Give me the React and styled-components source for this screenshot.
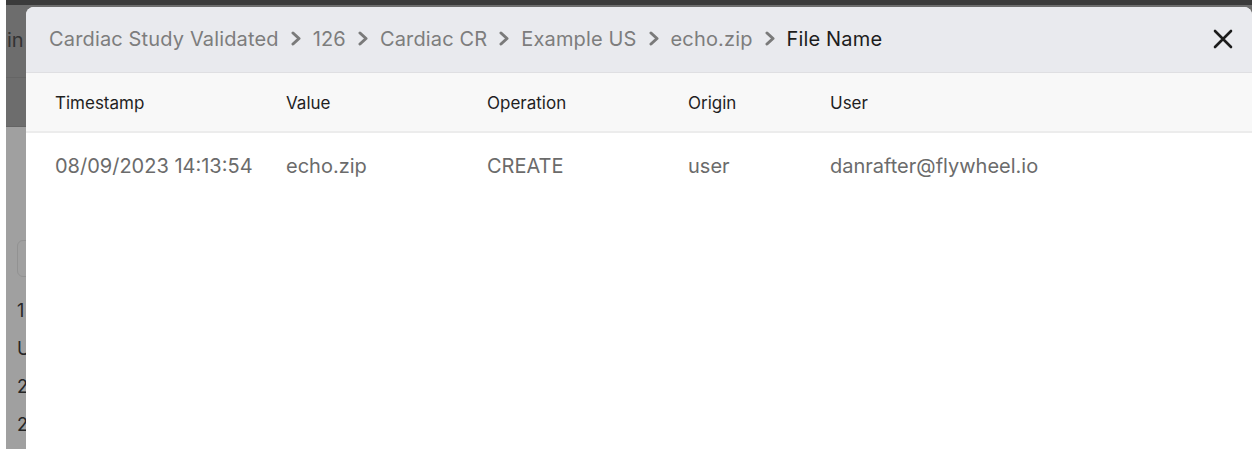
import React from 'react'
import styled, { createGlobalStyle } from 'styled-components'

const GlobalStyle = createGlobalStyle`
    html, body {
        margin: 0;
        padding: 0;
        background: #ffffff;
    }
    body {
        font-family: Inter, "Noto Sans", "Liberation Sans", sans-serif;
    }
`

const crumbs = ['Cardiac Study Validated', '126', 'Cardiac CR', 'Example US', 'echo.zip']

const columns = ['Timestamp', 'Value', 'Operation', 'Origin', 'User']

const rows = [
    ['08/09/2023 14:13:54', 'echo.zip', 'CREATE', 'user', 'danrafter@flywheel.io'],
]

const Chevron = () => (
    <svg width="12" height="15" viewBox="0 0 12 15" fill="none">
        <path d="M3 2l6 5.5-6 5.5" stroke="#7a7a7a" strokeWidth="3" strokeLinecap="round" strokeLinejoin="round" />
    </svg>
)

const CloseIcon = () => (
    <svg width="20" height="20" viewBox="0 0 20 20" fill="none">
        <path d="M2 2l16 16M18 2L2 18" stroke="#1c1c1c" strokeWidth="2.6" strokeLinecap="round" />
    </svg>
)

const App = () => {
    return (
        <>
            <GlobalStyle />
            <Screen>
                <Gutter />
                <Underlay>
                    <TopBar />
                    <DimHeader>
                        <DimTitle>in</DimTitle>
                    </DimHeader>
                    <DimBody>
                        <GhostInput />
                        <DimList>
                            <span>1</span>
                            <span>U</span>
                            <span>2</span>
                            <span>2</span>
                        </DimList>
                    </DimBody>

                    <Modal>
                        <ModalHeader>
                            <Breadcrumb>
                                {crumbs.map((c) => (
                                    <React.Fragment key={c}>
                                        <Crumb>{c}</Crumb>
                                        <Chevron />
                                    </React.Fragment>
                                ))}
                                <Crumb current>File Name</Crumb>
                            </Breadcrumb>
                            <CloseButton aria-label="Close">
                                <CloseIcon />
                            </CloseButton>
                        </ModalHeader>

                        <HeadRow>
                            {columns.map((c) => (
                                <HeadCell key={c}>{c}</HeadCell>
                            ))}
                        </HeadRow>

                        {rows.map((r, i) => (
                            <BodyRow key={i}>
                                {r.map((v, j) => (
                                    <BodyCell key={j}>{v}</BodyCell>
                                ))}
                            </BodyRow>
                        ))}
                    </Modal>
                </Underlay>
            </Screen>
        </>
    )
}

const Screen = styled.div`
    width: 1252px;
    height: 456px;
    display: flex;
    overflow: hidden;
`

const Gutter = styled.div`
    width: 6px;
    background: #ffffff;
`

const Underlay = styled.div`
    flex: 1;
    position: relative;
    display: flex;
    flex-direction: column;
`

const TopBar = styled.div`
    height: 5px;
    background: #3b3b3b;
`

const DimHeader = styled.div`
    height: 122px;
    box-sizing: border-box;
    padding: 23px 0 0 1px;
    border-bottom: 1px solid #646464;
    background: linear-gradient(#6d6d6d 72px, #656565 72px, #656565 73px, #6d6d6d 73px);
`

const DimTitle = styled.div`
    font-size: 20px;
    color: #333333;
`

const DimBody = styled.div`
    flex: 1;
    background: #a0a0a0;
    padding: 113px 0 0 11px;
    margin-bottom: 7px;
`

const GhostInput = styled.div`
    width: 60px;
    height: 35px;
    border: 1px solid #929292;
    border-radius: 6px;
`

const DimList = styled.div`
    display: flex;
    flex-direction: column;
    gap: 18px;
    margin-top: 24px;
    font-size: 18px;
    line-height: 20px;
    color: #262626;
`

const Modal = styled.div`
    position: absolute;
    left: 20px;
    top: 7px;
    right: 0;
    bottom: 0;
    background: #ffffff;
    border-radius: 8px 8px 0 0;
    overflow: hidden;
    display: flex;
    flex-direction: column;
`

const ModalHeader = styled.div`
    height: 66px;
    flex-shrink: 0;
    box-sizing: border-box;
    display: flex;
    align-items: center;
    justify-content: space-between;
    padding: 0 19px 2px 23px;
    background: #e9eaee;
    border-bottom: 1px solid #dfdfe2;
`

const Breadcrumb = styled.div`
    display: flex;
    align-items: center;
    gap: 11px;
`

const Crumb = styled.span`
    font-size: 20px;
    letter-spacing: 0.15px;
    color: ${(p) => (p.current ? '#1c1c1c' : '#7d7d7d')};
`

const CloseButton = styled.button`
    border: none;
    background: none;
    padding: 0;
    display: flex;
    cursor: pointer;
`

const gridCols = '231px 201px 201px 142px 1fr'

const HeadRow = styled.div`
    height: 60px;
    flex-shrink: 0;
    box-sizing: border-box;
    display: grid;
    grid-template-columns: ${gridCols};
    align-items: center;
    padding: 2px 0 0 29px;
    background: #f8f8f8;
    border-bottom: 2px solid #ececec;
`

const HeadCell = styled.div`
    font-size: 17px;
    color: #1f1f1f;
`

const BodyRow = styled.div`
    height: 62px;
    box-sizing: border-box;
    display: grid;
    grid-template-columns: ${gridCols};
    align-items: center;
    padding: 4px 0 0 29px;
`

const BodyCell = styled.div`
    font-size: 20px;
    color: #6b6b6b;
`

export default App
